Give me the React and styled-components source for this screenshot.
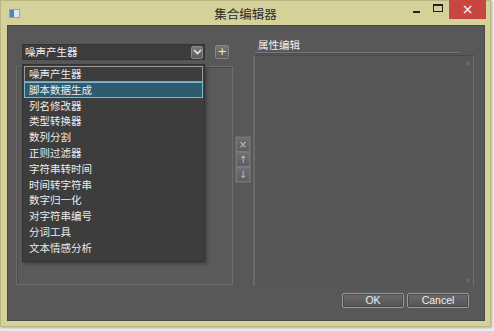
import styled, { createGlobalStyle } from 'styled-components'

const GlobalStyle = createGlobalStyle`
	html, body {
		margin: 0;
		padding: 0;
		background: #ececec;
	}
	body {
		font-family: "Noto Sans CJK SC", "DejaVu Sans", sans-serif;
	}
`

const items = [
	'噪声产生器',
	'脚本数据生成',
	'列名修改器',
	'类型转换器',
	'数列分割',
	'正则过滤器',
	'字符串转时间',
	'时间转字符串',
	'数字归一化',
	'对字符串编号',
	'分词工具',
	'文本情感分析',
]

export default () => {
	return (
		<Page>
			<GlobalStyle />
			<Window>
				<TitleBar>
					<AppIcon />
					<Title>集合编辑器</Title>
					<Controls>
						<MinButton>
							<span />
						</MinButton>
						<MaxButton>
							<span />
						</MaxButton>
						<CloseButton>×</CloseButton>
					</Controls>
				</TitleBar>
				<Client>
					<Body>
						<LeftColumn>
							<ComboRow>
								<Combo>
									<ComboText>噪声产生器</ComboText>
									<ArrowButton>
										<svg width="9" height="6" viewBox="0 0 9 6">
											<path d="M1 1 L4.5 4.5 L8 1" stroke="#e6e6e6" strokeWidth="1.6" fill="none" />
										</svg>
									</ArrowButton>
								</Combo>
								<SmallButton>+</SmallButton>
							</ComboRow>
							<Panel />
							<DropList>
								{items.map((item, i) => (
									<DropItem key={item} $state={i === 0 ? 'focus' : i === 1 ? 'hover' : ''}>
										{item}
									</DropItem>
								))}
							</DropList>
						</LeftColumn>
						<MiddleColumn>
							<MoveButtons>
								<MoveButton>×</MoveButton>
								<MoveButton>↑</MoveButton>
								<MoveButton>↓</MoveButton>
							</MoveButtons>
						</MiddleColumn>
						<RightColumn>
							<Label>属性编辑</Label>
							<Rule />
							<PropertyPanel>
								<ScrollTrack>
									<ScrollArrow>▲</ScrollArrow>
									<ScrollArrow>▼</ScrollArrow>
								</ScrollTrack>
							</PropertyPanel>
						</RightColumn>
					</Body>
					<Footer>
						<DialogButton>OK</DialogButton>
						<DialogButton>Cancel</DialogButton>
					</Footer>
				</Client>
			</Window>
		</Page>
	)
}

const Page = styled.div`
	width: 494px;
	height: 331px;
	background: #ececec;
	overflow: hidden;
`

const Window = styled.div`
	width: 489px;
	height: 325px;
	background: #d4d19a;
	border: 1px solid #b9b67f;
	display: flex;
	flex-direction: column;
	box-shadow: 1px 1px 2px rgba(0, 0, 0, 0.25);
`

const TitleBar = styled.div`
	height: 24px;
	display: flex;
	align-items: flex-start;
	position: relative;
`

const AppIcon = styled.div`
	width: 9px;
	height: 7px;
	margin: 8px 0 0 8px;
	background: linear-gradient(90deg, #4f84b7 0 4px, #dfe8ee 4px);
	border: 1px solid #8da9b8;
`

const Title = styled.div`
	position: absolute;
	left: 0;
	right: 0;
	top: 3px;
	text-align: center;
	font-size: 12.5px;
	color: #2d2d2d;
	pointer-events: none;
`

const Controls = styled.div`
	margin-left: auto;
	display: flex;
	align-items: flex-start;
	margin-right: 4px;
`

const MinButton = styled.div`
	width: 22px;
	height: 18px;
	display: flex;
	align-items: center;
	justify-content: center;
	span {
		width: 7px;
		height: 2px;
		margin-top: 4px;
		background: #222;
	}
`

const MaxButton = styled.div`
	width: 22px;
	height: 18px;
	display: flex;
	align-items: center;
	justify-content: center;
	span {
		width: 8px;
		height: 5px;
		margin-top: -4px;
		border: 1px solid #222;
		border-top-width: 2px;
	}
`

const CloseButton = styled.div`
	width: 37px;
	height: 19px;
	margin-top: -1px;
	background: #c84641;
	color: #fff;
	font-size: 14px;
	line-height: 18px;
	text-align: center;
	font-family: "DejaVu Sans", sans-serif;
`

const Client = styled.div`
	flex: 1;
	margin: 0 5px 5px 6px;
	background: #585858;
	border: 1px solid #4a4a4a;
	display: flex;
	flex-direction: column;
`

const Body = styled.div`
	display: flex;
	padding: 12px 0 0 8px;
	height: 248px;
`

const LeftColumn = styled.div`
	width: 217px;
	position: relative;
	display: flex;
	flex-direction: column;
`

const ComboRow = styled.div`
	display: flex;
	align-items: center;
	margin: 6px 0 0 6px;
	gap: 10px;
`

const Combo = styled.div`
	width: 183px;
	height: 16px;
	background: #3c3c3c;
	border: 1px solid #333;
	box-sizing: border-box;
	display: flex;
	align-items: center;
`

const ComboText = styled.div`
	flex: 1;
	padding-left: 2px;
	font-size: 10.5px;
	color: #f2f2f2;
	line-height: 14px;
`

const ArrowButton = styled.div`
	width: 12px;
	height: 13px;
	margin-right: 1px;
	background: linear-gradient(#7a7a7a, #5c5c5c);
	border: 1px solid #888;
	border-radius: 2px;
	box-sizing: border-box;
	display: flex;
	align-items: center;
	justify-content: center;
`

const SmallButton = styled.div`
	width: 14px;
	height: 14px;
	box-sizing: border-box;
	background: linear-gradient(#777, #5b5b5b);
	border: 1px solid #868686;
	border-radius: 2px;
	color: #eee;
	font-size: 11px;
	line-height: 12px;
	text-align: center;
	font-family: "DejaVu Sans", sans-serif;
`

const Panel = styled.div`
	margin-top: 6px;
	height: 219px;
	box-sizing: border-box;
	border: 1px solid #6c6c6c;
	box-shadow: inset 1px 1px 0 #4a4a4a;
	background: #5a5a5a;
`

const DropList = styled.div`
	position: absolute;
	left: 6px;
	top: 26px;
	width: 183px;
	box-sizing: border-box;
	background: #3d3d3d;
	border: 1px solid #333;
	padding: 1px 1px 5px;
	box-shadow: 2px 2px 3px rgba(0, 0, 0, 0.3);
`

const DropItem = styled.div`
	height: 15.8px;
	box-sizing: border-box;
	padding-left: 4px;
	font-size: 10.5px;
	line-height: 14px;
	color: #ececec;
	border: 1px solid
		${props => (props.$state === 'focus' ? '#9a9a9a' : props.$state === 'hover' ? '#7fb6cc' : 'transparent')};
	background: ${props => (props.$state === 'hover' ? '#2d5b71' : 'transparent')};
`

const MiddleColumn = styled.div`
	width: 20px;
	display: flex;
	justify-content: center;
	padding-top: 98px;
`

const MoveButtons = styled.div`
	display: flex;
	flex-direction: column;
	align-self: flex-start;
	width: 14px;
	border: 1px solid #666;
	background: #5f5f5f;
`

const MoveButton = styled.div`
	height: 15px;
	box-sizing: border-box;
	border: 1px solid #7a7a7a;
	background: linear-gradient(#6e6e6e, #5e5e5e);
	color: #bdbdbd;
	font-size: 10px;
	line-height: 13px;
	text-align: center;
	font-family: "DejaVu Sans", sans-serif;
`

const RightColumn = styled.div`
	width: 221px;
	display: flex;
	flex-direction: column;
`

const Label = styled.div`
	height: 14px;
	padding-left: 5px;
	font-size: 10.5px;
	line-height: 14px;
	color: #f0f0f0;
`

const Rule = styled.div`
	height: 1px;
	margin: 0 14px 0 2px;
	background: #777;
	border-bottom: 1px solid #4c4c4c;
`

const PropertyPanel = styled.div`
	margin-top: 1px;
	flex: 1;
	box-sizing: border-box;
	border-left: 2px solid #6a6a6a;
	border-top: 1px solid #4a4a4a;
	background: #575757;
	display: flex;
	justify-content: flex-end;
`

const ScrollTrack = styled.div`
	width: 10px;
	border-right: 1px solid #6e6e6e;
	display: flex;
	flex-direction: column;
	justify-content: space-between;
	padding: 2px 0;
`

const ScrollArrow = styled.div`
	font-size: 6px;
	color: #6a6a6a;
	text-align: center;
	font-family: "DejaVu Sans", sans-serif;
`

const Footer = styled.div`
	display: flex;
	justify-content: flex-end;
	gap: 3px;
	padding: 7px 15px 0 0;
`

const DialogButton = styled.div`
	width: 62px;
	height: 15px;
	box-sizing: border-box;
	border: 1px solid #9a9a9a;
	border-radius: 2px;
	background: linear-gradient(#6c6c6c, #545454);
	box-shadow: inset 0 0 0 1px #4a4a4a;
	color: #eee;
	font-size: 10.5px;
	line-height: 13px;
	text-align: center;
	font-family: "Liberation Sans", sans-serif;
`
